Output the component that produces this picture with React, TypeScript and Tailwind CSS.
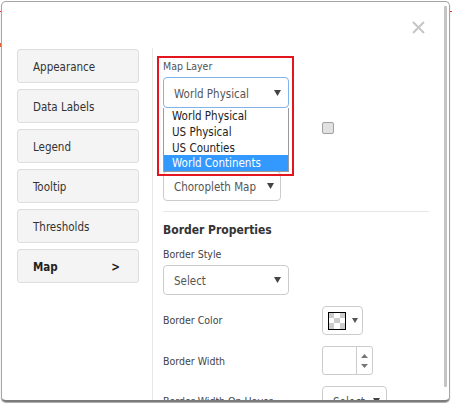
import React from 'react';

const font = "font-['DejaVu_Sans_Condensed','DejaVu_Sans',sans-serif] font-stretch-condensed";

function Caret({ color = '#444' }: { color?: string }) {
  return (
    <svg width="7" height="6" viewBox="0 0 7 6">
      <polygon points="0,0 7,0 3.5,6" fill={color} />
    </svg>
  );
}

function SelectBox({ label, width, height = 'h-[30px]', focused }: { label: string; width: string; height?: string; focused?: boolean }) {
  return (
    <div
      className={`${width} ${height} flex items-center justify-between pl-[10px] pr-[7px] rounded-[4px] border bg-white text-[11.5px] text-[#555] ${
        focused ? 'border-[#80b3ea]' : 'border-[#ccc]'
      }`}
    >
      <span className="pt-[4px]">{label}</span>
      <Caret />
    </div>
  );
}

const navItems = ['Appearance', 'Data Labels', 'Legend', 'Tooltip', 'Thresholds'];
const layers = ['World Physical', 'US Physical', 'US Counties', 'World Continents'];
const checker = [1, 0, 1, 0, 1, 0, 1, 0, 1];

export default function App() {
  return (
    <div className={`relative w-[452px] h-[403px] bg-white overflow-hidden pl-[1px] pt-[1px] ${font}`}>
      {/* page behind the dialog */}
      <div className="absolute left-0 top-[11px] w-full h-[1px] bg-[#e3262e]" />
      <div className="absolute left-0 top-[43px] w-[1px] h-[4px] bg-[#e8643a]" />

      <div className="relative z-10 w-[449px] h-[401px] bg-white rounded-[5px] border border-[#a5a5a5] border-b-2 border-b-[#7c7c7c] shadow-[0_1px_1px_rgba(0,0,0,0.35)] overflow-hidden">
        {/* scrollbar thumb */}
        <div className="absolute right-[2px] top-[4px] w-[3px] h-[381px] bg-[#c4c4c4] rounded-[1px]" />

        <div className="h-[47px] flex justify-end pt-[19px] pr-[24px]">
          <svg width="13" height="13" viewBox="0 0 13 13">
            <path d="M1 1 L12 12 M12 1 L1 12" stroke="#c6c6c6" strokeWidth="2" />
          </svg>
        </div>

        <div className="flex h-[351px]">
          <div className="ml-[15px] w-[122px] flex flex-col gap-[6px]">
            {navItems.map((item) => (
              <div
                key={item}
                className="h-[34px] flex items-center pl-[15px] pt-[4px] rounded-[3px] border border-[#dedede] bg-[#f4f4f4] text-[11.5px] text-[#333]"
              >
                {item}
              </div>
            ))}
            <div className="h-[34px] flex items-center justify-between pl-[15px] pr-[18px] pt-[4px] rounded-[3px] border border-[#dedede] bg-[#f4f4f4] text-[11.5px] font-bold text-[#222]">
              <span>Map</span>
              <span>&gt;</span>
            </div>
          </div>

          <div className="ml-[13px] -mt-[1px] w-px bg-[#e8e8e8]" />

          <div className="relative flex-1 pl-[10px]">
            {/* highlight frame */}
            <div className="absolute left-[4px] top-[7px] w-[137px] h-[120px] border-2 border-[#e3161f] z-20 pointer-events-none" />

            <div className="mt-[10px] leading-[14px] text-[10.5px] text-[#555]">Map Layer</div>
            <div className="relative mt-[4px] w-[126px]">
              <SelectBox label="World Physical" width="w-[126px]" height="h-[31px]" focused />
              <div className="absolute left-0 top-full z-10 w-[126px] bg-white border border-t-0 border-[#9a9a9a] text-[11.5px] text-[#222]">
                {layers.map((l) => (
                  <div
                    key={l}
                    className={`h-[15.75px] leading-[15.75px] pl-[8px] pt-[1px] ${
                      l === 'World Continents' ? 'bg-[#3399ff] text-white' : ''
                    }`}
                  >
                    {l}
                  </div>
                ))}
              </div>
            </div>

            <div className="mt-[14px] h-[12px] flex items-center">
              <span className="w-[159px]" />
              <div className="w-[12px] h-[12px] rounded-[2px] border border-[#a0a0a0] bg-[#e1e1e1]" />
            </div>

            <div className="mt-[37px]">
              <div className="w-[118px] h-[30px] flex items-center justify-between pl-[10px] pr-[6px] rounded-[4px] border border-[#ccc] text-[11.5px] text-[#555]">
                <span className="pt-[4px]">Choropleth Map</span>
                <Caret />
              </div>
            </div>

            <div className="mt-[10px] mr-[20px] border-t border-[#e6e6e6]" />

            <div className="mt-[10px] leading-[16px] text-[12px] font-bold text-[#333]">Border Properties</div>
            <div className="mt-[9px] leading-[14px] text-[10.5px] text-[#444]">Border Style</div>
            <div className="mt-[4px]">
              <SelectBox label="Select" width="w-[126px]" />
            </div>

            <div className="mt-[11px] h-[29px] flex items-center">
              <span className="w-[159px] text-[10.5px] text-[#444]">Border Color</span>
              <div className="w-[41px] h-[29px] flex items-center gap-[6px] pl-[5px] rounded-[4px] border border-[#ccc]">
                <div className="w-[18px] h-[18px] border border-black grid grid-cols-3">
                  {checker.map((c, i) => (
                    <div key={i} className={c ? 'bg-[#cccccc]' : 'bg-white'} />
                  ))}
                </div>
                <svg width="6" height="5" viewBox="0 0 6 5">
                  <polygon points="0,0 6,0 3,5" fill="#555" />
                </svg>
              </div>
            </div>

            <div className="mt-[11px] h-[29px] flex items-center">
              <span className="w-[159px] pt-[2px] text-[10.5px] text-[#444]">Border Width</span>
              <div className="w-[51px] h-[29px] flex rounded-[3px] border border-[#ccc]">
                <div className="w-[34px] border-r border-[#ccc]" />
                <div className="flex-1 flex flex-col items-center justify-center gap-[6px]">
                  <svg width="7" height="4" viewBox="0 0 7 4">
                    <polygon points="0,4 7,4 3.5,0" fill="#777" />
                  </svg>
                  <svg width="7" height="4" viewBox="0 0 7 4">
                    <polygon points="0,0 7,0 3.5,4" fill="#777" />
                  </svg>
                </div>
              </div>
            </div>

            <div className="mt-[11px] h-[29px] flex items-center">
              <span className="w-[159px] pt-[2px] text-[10.5px] text-[#444]">Border Width On Hover</span>
              <div className="w-[65px] h-[29px] flex items-center justify-between pl-[10px] pr-[6px] rounded-[4px] border border-[#ccc] text-[11.5px] text-[#555]">
                <span className="pt-[4px]">Select</span>
                <Caret />
              </div>
            </div>
          </div>
        </div>
      </div>
    </div>
  );
}
